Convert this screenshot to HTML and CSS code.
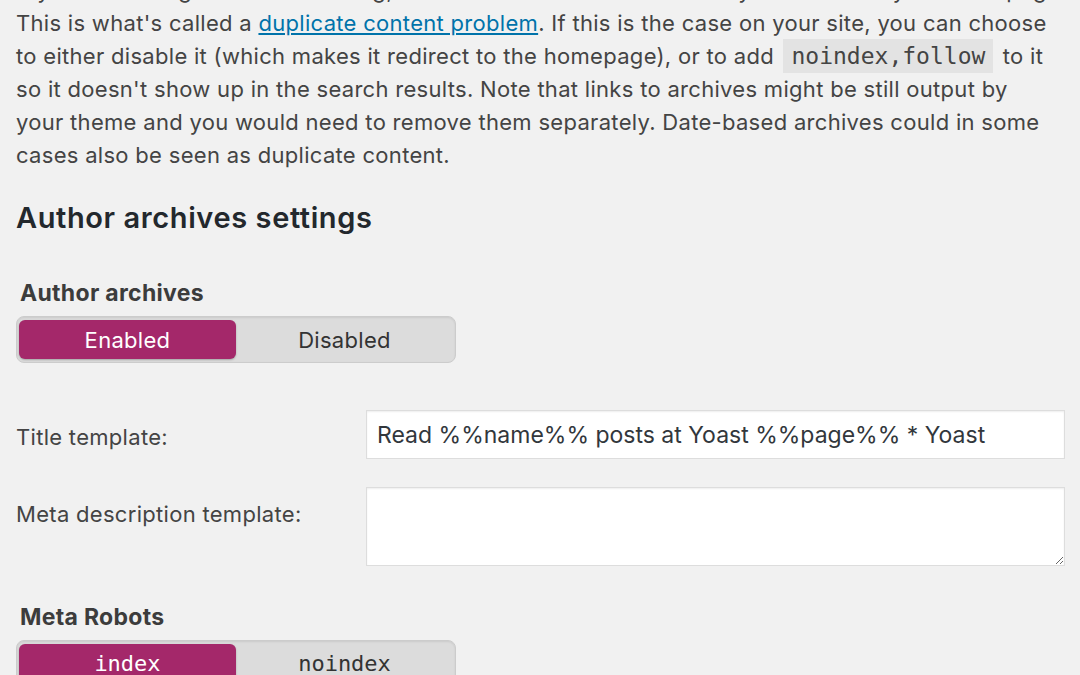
FILE: index.html
```html
<!DOCTYPE html>
<html lang="en">
<head>
  <meta charset="UTF-8" />
  <title>Archives settings</title>
  <link rel="stylesheet" href="styles.css">
</head>
<body>
  <div class="wrap">
    <p class="intro">If you're running a one author blog, the author archive will be exactly the same as your homepage.<br>
      This is what's called a <a href="#">duplicate content problem</a>. If this is the case on your site, you can choose<br>
      to either disable it (which makes it redirect to the homepage), or to add <code>noindex,follow</code> to it<br>
      so it doesn't show up in the search results. Note that links to archives might be still output by<br>
      your theme and you would need to remove them separately. Date-based archives could in some<br>
      cases also be seen as duplicate content.</p>

    <h2>Author archives settings</h2>

    <div class="field">
      <div class="field-label">Author archives</div>
      <div class="switch">
        <span class="switch-opt active">Enabled</span>
        <span class="switch-opt">Disabled</span>
      </div>
    </div>

    <div class="row row-title">
      <label for="title-template">Title template:</label>
      <input type="text" id="title-template" value="Read %%name%% posts at Yoast %%page%% * Yoast" />
    </div>

    <div class="row">
      <label for="metadesc-template">Meta description template:</label>
      <textarea id="metadesc-template"></textarea>
    </div>

    <div class="field field-robots">
      <div class="field-label">Meta Robots</div>
      <div class="switch mono">
        <span class="switch-opt active">index</span>
        <span class="switch-opt">noindex</span>
      </div>
    </div>
  </div>
</body>
</html>
```

FILE: styles.css
```css
* {
  box-sizing: border-box;
}
html, body {
  margin: 0;
  padding: 0;
  height: 100%;
  overflow: hidden;
}
body {
  background-color: #f1f1f1;
  color: #444;
  font-family: 'Inter', 'Liberation Sans', sans-serif;
  font-size: 22px;
  letter-spacing: 0.3px;
}
.wrap {
  padding: 0 16px;
}
.intro {
  margin: -26px 0 0;
  line-height: 33px;
  white-space: nowrap;
}
.intro a {
  color: #0073aa;
  text-decoration: underline;
}
code {
  font-family: 'DejaVu Sans Mono', monospace;
  font-size: 23px;
  letter-spacing: 0;
  background-color: #e3e3e3;
  padding: 4px 8px;
  margin: 0 3px;
}
h2 {
  color: #23282d;
  font-size: 29px;
  font-weight: 600;
  letter-spacing: 0.6px;
  line-height: 36px;
  margin: 28px 0 42px;
}
.field-label {
  font-size: 23px;
  font-weight: 700;
  color: #3c3c3c;
  line-height: 30px;
  margin: 0 0 8px 4px;
}
.switch {
  display: flex;
  width: 440px;
  height: 47px;
  padding: 3px 2px;
  background-color: #dcdcdc;
  border: 1px solid #ccc;
  border-radius: 8px;
  box-shadow: inset 0 1px 2px rgba(0,0,0,0.08);
}
.switch-opt {
  flex: 1;
  display: flex;
  align-items: center;
  justify-content: center;
  color: #333;
  border-radius: 6px;
}
.switch-opt.active {
  background-color: #a4286a;
  color: #fff;
  box-shadow: 0 1px 2px rgba(0,0,0,0.25);
}
.switch.mono .switch-opt {
  font-family: 'DejaVu Sans Mono', monospace;
  letter-spacing: 0;
}
.row {
  display: flex;
  align-items: flex-start;
}
.row label {
  width: 350px;
  flex-shrink: 0;
  padding-top: 12px;
  line-height: 30px;
}
.row-title {
  margin: 47px 0 28px;
}
.row input,
.row textarea {
  flex: 1;
  margin-right: -1px;
  background: #fff;
  border: 1px solid #ddd;
  box-shadow: inset 0 1px 2px rgba(0,0,0,0.07);
  font-family: 'Inter', 'Liberation Sans', sans-serif;
  font-size: 23px;
  letter-spacing: 0;
  color: #32373c;
  padding: 0 10px;
  outline: none;
}
.row input {
  height: 49px;
}
.row textarea {
  height: 79px;
  resize: vertical;
}
.field-robots {
  margin-top: 36px;
}
```
